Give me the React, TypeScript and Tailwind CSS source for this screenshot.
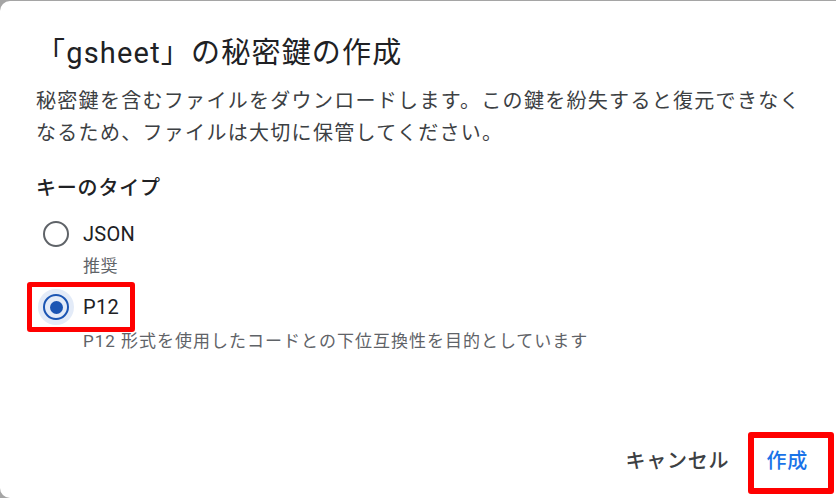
import { useState } from 'react'

const FONT = 'font-[Roboto,"Noto_Sans_CJK_JP",sans-serif]'

type KeyType = 'json' | 'p12'

function Radio({ checked }: { checked: boolean }) {
  return (
    <span
      className={[
        'flex size-9 shrink-0 items-center justify-center rounded-full',
        checked ? 'bg-[#e3ebf8]' : 'bg-transparent',
      ].join(' ')}
    >
      <span
        className={[
          'flex size-[26px] items-center justify-center rounded-full border-[2.6px]',
          checked ? 'border-[#1b55b3]' : 'border-[#5f6368]',
        ].join(' ')}
      >
        {checked && <span className="size-[13px] rounded-full bg-[#1b55b3]" />}
      </span>
    </span>
  )
}

function Highlight({ className }: { className: string }) {
  return (
    <span
      aria-hidden="true"
      className={`pointer-events-none absolute rounded-[3px] border-[5px] border-[#ff0000] ${className}`}
    />
  )
}

export default function App() {
  const [keyType, setKeyType] = useState<KeyType>('p12')

  return (
    <div className={`h-[498px] w-[836px] overflow-hidden bg-[#a5a5a5] ${FONT}`}>
      <div className="mt-px flex h-[497px] w-[836px] flex-col rounded-l-[10px] bg-white pl-9 pt-[32px]">
        <h1 className="text-[29px] leading-[40px] tracking-[1.2px] text-[#202124]">
          「gsheet」の秘密鍵の作成
        </h1>

        <p className="mt-[12px] w-[776px] text-[20px] leading-[32px] tracking-[1.3px] text-[#3c4043]">
          秘密鍵を含むファイルをダウンロードします。この鍵を紛失すると復元できなくなるため、ファイルは大切に保管してください。
        </p>

        <p className="mt-[25px] text-[20px] font-medium leading-[28px] tracking-[0.8px] text-[#202124]">
          キーのタイプ
        </p>

        <button
          type="button"
          onClick={() => setKeyType('json')}
          className="ml-[2px] mt-[14px] flex items-center gap-[9px] self-start"
        >
          <Radio checked={keyType === 'json'} />
          <span className="text-[20px] leading-[28px] tracking-[0.3px] text-[#202124]">JSON</span>
        </button>
        <p className="ml-[47px] mt-[2px] text-[17px] leading-[24px] tracking-[0.6px] text-[#5f6368]">推奨</p>

        <button
          type="button"
          onClick={() => setKeyType('p12')}
          className="relative ml-[2px] mt-[11px] flex items-center gap-[9px] self-start"
        >
          <Radio checked={keyType === 'p12'} />
          <span className="text-[20px] leading-[28px] tracking-[0.3px] text-[#202124]">P12</span>
          <Highlight className="-left-[11px] -top-[7px] h-[50px] w-[108px]" />
        </button>
        <p className="ml-[47px] mt-[4px] text-[17px] leading-[24px] tracking-[1px] text-[#5f6368]">
          P12 形式を使用したコードとの下位互換性を目的としています
        </p>

        <div className="mt-auto mb-[13px] flex items-center justify-end gap-[5px] pr-3">
          <button
            type="button"
            className="h-12 px-4 text-[20px] font-medium tracking-[0.8px] text-[#3c4043]"
          >
            キャンセル
          </button>
          <button
            type="button"
            className="relative h-12 px-4 text-[20px] font-medium tracking-[0.8px] text-[#1a73e8]"
          >
            作成
            <Highlight className="-bottom-[9px] -left-[2px] -right-[10px] -top-[5px] border-[6px]" />
          </button>
        </div>
      </div>
    </div>
  )
}
